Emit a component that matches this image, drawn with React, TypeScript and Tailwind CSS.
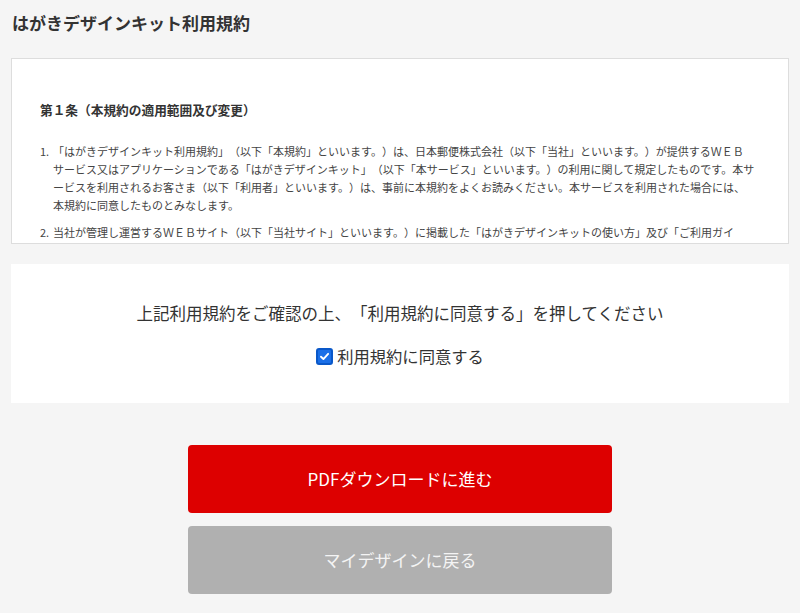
import { useState } from "react";

const TermsAgree = () => {
  const [agreed, setAgreed] = useState(true);

  return (
    <div className="min-h-screen bg-[#f5f5f5] text-[#333] font-['Noto_Sans_CJK_JP','Noto_Sans',sans-serif] [text-spacing-trim:space-all]">
      <h1 className="px-3 pt-[12px] text-[17px] font-bold leading-[22px] text-[#333]">
        はがきデザインキット利用規約
      </h1>

      {/* Terms box */}
      <div className="mx-[11px] mt-[24px] h-[186px] overflow-hidden border border-[#dddddd] bg-white pl-[28px] pr-[20px] pt-[42px]">
        <h2 className="mb-[23px] text-[12.7px] font-bold leading-[18px]">第１条（本規約の適用範囲及び変更）</h2>
        <ol className="text-[11px] leading-[18px] text-[#444]">
          <li className="flex">
            <span className="w-[13px] shrink-0">1.</span>
            <span className="whitespace-nowrap">
              「はがきデザインキット利用規約」（以下「本規約」といいます。）は、日本郵便株式会社（以下「当社」といいます。）が提供するＷＥＢ
              <br />
              サービス又はアプリケーションである「はがきデザインキット」（以下「本サービス」といいます。）の利用に関して規定したものです。本サ
              <br />
              ービスを利用されるお客さま（以下「利用者」といいます。）は、事前に本規約をよくお読みください。本サービスを利用された場合には、
              <br />
              本規約に同意したものとみなします。
            </span>
          </li>
          <li className="mt-[9px] flex">
            <span className="w-[13px] shrink-0">2.</span>
            <span className="whitespace-nowrap">
              当社が管理し運営するＷＥＢサイト（以下「当社サイト」といいます。）に掲載した「はがきデザインキットの使い方」及び「ご利用ガイ
              <br />
              ド」その他本サービスに関する諸規定は、本規約の一部を構成するものとします。
            </span>
          </li>
        </ol>
      </div>

      {/* Agree panel */}
      <div className="mx-[11px] mt-[20px] flex h-[139px] flex-col items-center bg-white pt-[37px]">
        <p className="text-[16.5px] leading-[24px] text-[#333]">
          上記利用規約をご確認の上、「利用規約に同意する」を押してください
        </p>
        <label
          className="mt-[19px] flex cursor-pointer items-center text-[16.3px] leading-[24px] text-[#333]"
          onClick={() => setAgreed(prev => !prev)}
        >
          <span
            className={`mr-[4px] flex h-[17px] w-[17px] items-center justify-center rounded-[3px] border-2 ${
              agreed ? "border-[#0a58c9] bg-[#1a6fe8]" : "border-[#999] bg-white"
            }`}
          >
            {agreed && (
              <svg width="11" height="11" viewBox="0 0 10 10" fill="none">
                <path d="M1.8 5.2 4 7.3 8.3 2.6" stroke="white" strokeWidth="1.7" strokeLinecap="round" strokeLinejoin="round" />
              </svg>
            )}
          </span>
          利用規約に同意する
        </label>
      </div>

      {/* Buttons */}
      <div className="mt-[42px] flex flex-col items-center gap-[13px]">
        <button className="flex h-[68px] w-[424px] items-center justify-center rounded-[4px] bg-[#dd0000] text-[17px] text-white">
          PDFダウンロードに進む
        </button>
        <button className="flex h-[68px] w-[424px] items-center justify-center rounded-[4px] bg-[#b0b0b0] text-[17px] text-[#f4f4f4]">
          マイデザインに戻る
        </button>
      </div>
    </div>
  );
};

export default TermsAgree;
